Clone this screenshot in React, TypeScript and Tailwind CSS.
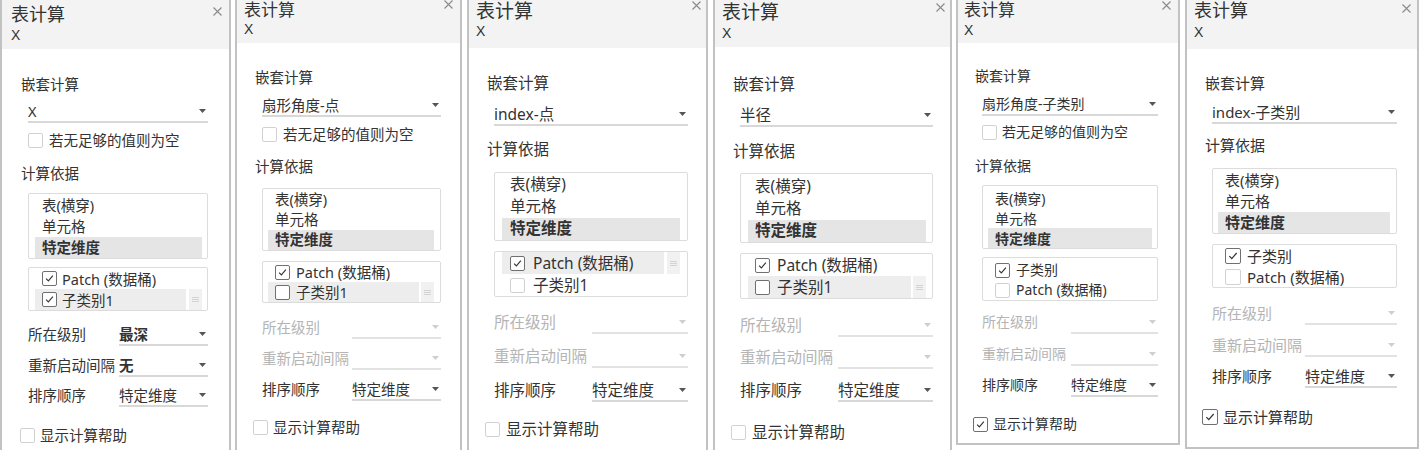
import React from "react";
import clsx from "clsx";

type Item = { label: string; checked: boolean; hl?: boolean; dark?: boolean };

type Cfg = {
  panel: string;
  header: string;
  titleCol: string;
  title: string;
  xMt: string;
  close: string;
  body: string;
  labelMl: string;
  indent: string;
  m: {
    nest: string;
    dd: string;
    cb: string;
    basis: string;
    l1: string;
    l2: string;
    lvl: string;
    rst: string;
    sort: string;
    help: string;
  };
  list: string;
  l1pt: string;
  l2pt: string;
  row: string;
  rowPl: string;
  valueCol: string;
  gap: string;
  cbGap: string;
  helpGap: string;
  cbSize: string;
  handle: string;
  nested: string;
  showEmpty: boolean;
  items: Item[];
  level?: { value: string; bold: boolean };
  restart?: { value: string; bold: boolean };
  helpChecked: boolean;
};

const panels: Cfg[] = [
  {
    panel: "w-[231px] h-[450px]",
    header: "h-[49px] pl-[9px]",
    titleCol: "pt-[5px]",
    title: "text-[18px] leading-[21px]",
    xMt: "mt-[1px]",
    close: "mt-[7px] mr-[7px]",
    body: "pl-[18px] pr-[21px] text-[14.5px]",
    labelMl: "ml-[1px]",
    indent: "ml-[8px]",
    m: {
      nest: "mt-[25px]",
      dd: "mt-[7px]",
      cb: "mt-[7px]",
      basis: "mt-[13px]",
      l1: "mt-[10px]",
      l2: "mt-[8px]",
      lvl: "mt-[13px]",
      rst: "mt-[9px]",
      sort: "mt-[8px]",
      help: "mt-[18px]",
    },
    list: "pl-[6px] pr-[5px]",
    l1pt: "pt-[1px]",
    l2pt: "pt-0",
    row: "h-[21px]",
    rowPl: "pl-[7px]",
    valueCol: "w-[91px]",
    gap: "gap-[5px]",
    cbGap: "gap-[6px]",
    helpGap: "gap-[5px]",
    cbSize: "w-[15px] h-[15px]",
    handle: "w-[13px] ml-[3px]",
    nested: "X",
    showEmpty: true,
    items: [
      { label: "Patch (数据桶)", checked: true },
      { label: "子类别1", checked: true, hl: true },
    ],
    level: { value: "最深", bold: true },
    restart: { value: "无", bold: true },
    helpChecked: false,
  },
  {
    panel: "ml-[4px] w-[227px] h-[450px]",
    header: "h-[43px] pl-[7px]",
    titleCol: "pt-[1px]",
    title: "text-[17px] leading-[19px]",
    xMt: "mt-[1px]",
    close: "mt-0 mr-[7px]",
    body: "pl-[16px] pr-[19px] text-[14.5px]",
    labelMl: "ml-[2px]",
    indent: "ml-[9px]",
    m: {
      nest: "mt-[24px]",
      dd: "mt-[8px]",
      cb: "mt-[7px]",
      basis: "mt-[12px]",
      l1: "mt-[12px]",
      l2: "mt-[10px]",
      lvl: "mt-[14px]",
      rst: "mt-[9px]",
      sort: "mt-[9px]",
      help: "mt-[16px]",
    },
    list: "pl-[5px] pr-[6px]",
    l1pt: "pt-[1px]",
    l2pt: "pt-0",
    row: "h-[20px]",
    rowPl: "pl-[7px]",
    valueCol: "w-[90px]",
    gap: "gap-[6px]",
    cbGap: "gap-[6px]",
    helpGap: "gap-[5px]",
    cbSize: "w-[15px] h-[15px]",
    handle: "w-[13px] ml-[2px]",
    nested: "扇形角度-点",
    showEmpty: true,
    items: [
      { label: "Patch (数据桶)", checked: true },
      { label: "子类别1", checked: false, hl: true, dark: true },
    ],
    helpChecked: false,
  },
  {
    panel: "ml-[5px] w-[241px] h-[450px]",
    header: "h-[48px] pl-[7px]",
    titleCol: "pt-[1px]",
    title: "text-[19px] leading-[21px]",
    xMt: "mt-[1px]",
    close: "mt-[1px] mr-[5px]",
    body: "pl-[16px] pr-[18px] text-[15.5px]",
    labelMl: "ml-[2px]",
    indent: "ml-[9px]",
    m: {
      nest: "mt-[25px]",
      dd: "mt-[11px]",
      cb: "mt-0",
      basis: "mt-[13px]",
      l1: "mt-[13px]",
      l2: "mt-[10px]",
      lvl: "mt-[15px]",
      rst: "mt-[12px]",
      sort: "mt-[12px]",
      help: "mt-[17px]",
    },
    list: "pl-[7px] pr-[7px]",
    l1pt: "pt-[1px]",
    l2pt: "pt-0",
    row: "h-[22px]",
    rowPl: "pl-[8px]",
    valueCol: "w-[98px]",
    gap: "gap-[8px]",
    cbGap: "gap-[6px]",
    helpGap: "gap-[6px]",
    cbSize: "w-[15px] h-[15px]",
    handle: "w-[13px] ml-[3px]",
    nested: "index-点",
    showEmpty: false,
    items: [
      { label: "Patch (数据桶)", checked: true, hl: true },
      { label: "子类别1", checked: false },
    ],
    helpChecked: false,
  },
  {
    panel: "ml-[5px] w-[239px] h-[450px]",
    header: "h-[47px] pl-[7px]",
    titleCol: "pt-[2px]",
    title: "text-[19px] leading-[21px]",
    xMt: "mt-[2px]",
    close: "mt-[3px] mr-[5px]",
    body: "pl-[16px] pr-[17px] text-[15.5px]",
    labelMl: "ml-[2px]",
    indent: "ml-[9px]",
    m: {
      nest: "mt-[27px]",
      dd: "mt-[11px]",
      cb: "mt-0",
      basis: "mt-[14px]",
      l1: "mt-[12px]",
      l2: "mt-[10px]",
      lvl: "mt-[16px]",
      rst: "mt-[10px]",
      sort: "mt-[11px]",
      help: "mt-[20px]",
    },
    list: "pl-[7px] pr-[6px]",
    l1pt: "pt-[2px]",
    l2pt: "pt-0",
    row: "h-[22px]",
    rowPl: "pl-[7px]",
    valueCol: "w-[98px]",
    gap: "gap-[7px]",
    cbGap: "gap-[6px]",
    helpGap: "gap-[6px]",
    cbSize: "w-[15px] h-[15px]",
    handle: "w-[13px] ml-[2px]",
    nested: "半径",
    showEmpty: false,
    items: [
      { label: "Patch (数据桶)", checked: true },
      { label: "子类别1", checked: false, hl: true, dark: true },
    ],
    helpChecked: false,
  },
  {
    panel: "ml-[4px] w-[224px] h-[445px] border-b-2",
    header: "h-[43px] pl-[6px]",
    titleCol: "pt-[1px]",
    title: "text-[17px] leading-[19px]",
    xMt: "mt-[2px]",
    close: "mt-[1px] mr-[7px]",
    body: "pl-[15px] pr-[20px] text-[14px]",
    labelMl: "ml-[2px]",
    indent: "ml-[9px]",
    m: {
      nest: "mt-[23px]",
      dd: "mt-[8px]",
      cb: "mt-[6px]",
      basis: "mt-[14px]",
      l1: "mt-[9px]",
      l2: "mt-[8px]",
      lvl: "mt-[11px]",
      rst: "mt-[10px]",
      sort: "mt-[9px]",
      help: "mt-[17px]",
    },
    list: "pl-[5px] pr-[5px]",
    l1pt: "pt-[2px]",
    l2pt: "pt-[2px]",
    row: "h-[20px]",
    rowPl: "pl-[7px]",
    valueCol: "w-[89px]",
    gap: "gap-[6px]",
    cbGap: "gap-[5px]",
    helpGap: "gap-[5px]",
    cbSize: "w-[15px] h-[15px]",
    handle: "w-[13px] ml-[2px]",
    nested: "扇形角度-子类别",
    showEmpty: true,
    items: [
      { label: "子类别", checked: true },
      { label: "Patch (数据桶)", checked: false },
    ],
    helpChecked: true,
  },
  {
    panel: "ml-[5px] w-[234px] h-[449px] border-b-2",
    header: "h-[49px] pl-[7px]",
    titleCol: "pt-[1px]",
    title: "text-[18px] leading-[21px]",
    xMt: "mt-[2px]",
    close: "mt-[4px] mr-[6px]",
    body: "pl-[15px] pr-[20px] text-[15px]",
    labelMl: "ml-[3px]",
    indent: "ml-[10px]",
    m: {
      nest: "mt-[24px]",
      dd: "mt-[9px]",
      cb: "mt-0",
      basis: "mt-[11px]",
      l1: "mt-[13px]",
      l2: "mt-[10px]",
      lvl: "mt-[15px]",
      rst: "mt-[10px]",
      sort: "mt-[9px]",
      help: "mt-[19px]",
    },
    list: "pl-[5px] pr-[6px]",
    l1pt: "pt-[1px]",
    l2pt: "pt-0",
    row: "h-[21px]",
    rowPl: "pl-[7px]",
    valueCol: "w-[93px]",
    gap: "gap-[6px]",
    cbGap: "gap-[6px]",
    helpGap: "gap-[5px]",
    cbSize: "w-[16px] h-[16px]",
    handle: "w-[13px] ml-[2px]",
    nested: "index-子类别",
    showEmpty: false,
    items: [
      { label: "子类别", checked: true },
      { label: "Patch (数据桶)", checked: false },
    ],
    helpChecked: true,
  },
];

function Check({ checked, dark, size }: { checked: boolean; dark?: boolean; size: string }) {
  return (
    <span
      className={clsx(
        "shrink-0 flex items-center justify-center rounded-[2px] border bg-white",
        size,
        checked || dark ? "border-[#707070]" : "border-[#d2d2d2]"
      )}
    >
      {checked && (
        <svg viewBox="0 0 15 15" className="w-full h-full">
          <path d="M3.6 7.6 L6.2 10.3 L11.4 4.3" fill="none" stroke="#333" strokeWidth="1.3" />
        </svg>
      )}
    </span>
  );
}

function Arrow({ disabled }: { disabled?: boolean }) {
  return (
    <svg width="7" height="4" viewBox="0 0 7 4" className="shrink-0 mr-[2px]">
      <path d="M0 0 H7 L3.5 4 Z" fill={disabled ? "#cfcfcf" : "#555"} />
    </svg>
  );
}

function Dropdown({
  value,
  bold,
  disabled,
  className,
}: {
  value: string;
  bold?: boolean;
  disabled?: boolean;
  className?: string;
}) {
  return (
    <div
      className={clsx(
        "flex items-center h-[22px] border-b-2",
        disabled ? "border-[#e2e2e2]" : "border-[#d8d8d8]",
        className
      )}
    >
      <span className={clsx("flex-1 leading-[20px] whitespace-nowrap", bold && "font-bold")}>{value}</span>
      <Arrow disabled={disabled} />
    </div>
  );
}

function Handle({ cls }: { cls: string }) {
  return (
    <div className={clsx("shrink-0 self-stretch bg-[#f1f1f1] flex items-center justify-center", cls)}>
      <svg width="7" height="7" viewBox="0 0 7 7">
        <path d="M0 1.5 H7 M0 3.5 H7 M0 5.5 H7" stroke="#cccccc" strokeWidth="0.8" />
      </svg>
    </div>
  );
}

function LevelRow({
  cfg,
  mt,
  label,
  value,
  bold,
  disabled,
}: {
  cfg: Cfg;
  mt: string;
  label: string;
  value: string;
  bold?: boolean;
  disabled?: boolean;
}) {
  return (
    <div className={clsx("flex", cfg.indent, mt)}>
      <span
        className={clsx(
          "shrink-0 leading-[20px] h-[22px] whitespace-nowrap",
          cfg.valueCol,
          disabled && "text-[#b4b4b4]"
        )}
      >
        {label}
      </span>
      <Dropdown className="flex-1" value={value} bold={bold} disabled={disabled} />
    </div>
  );
}

function Panel({ cfg }: { cfg: Cfg }) {
  const levelDisabled = !cfg.level;
  return (
    <div className={clsx("shrink-0 flex flex-col bg-white border-x-2 border-[#c2c2c2]", cfg.panel)}>
      <div
        className={clsx(
          "shrink-0 flex justify-between bg-[#f3f3f3] font-['Liberation_Sans','Noto_Sans_CJK_SC',sans-serif]",
          cfg.header
        )}
      >
        <div className={clsx("flex flex-col", cfg.titleCol)}>
          <div className={clsx("whitespace-nowrap", cfg.title)}>表计算</div>
          <div className={clsx("text-[14px] leading-[16px]", cfg.xMt)}>X</div>
        </div>
        <svg width="9" height="9" viewBox="0 0 9 9" className={clsx("shrink-0", cfg.close)}>
          <path d="M0.5 0.5 L8.5 8.5 M8.5 0.5 L0.5 8.5" stroke="#8a8a8a" strokeWidth="1.1" />
        </svg>
      </div>
      <div className={clsx("flex flex-col", cfg.body)}>
        <div className={clsx("leading-[20px] h-[20px] whitespace-nowrap", cfg.labelMl, cfg.m.nest)}>嵌套计算</div>
        <Dropdown className={clsx(cfg.indent, cfg.m.dd)} value={cfg.nested} />
        {cfg.showEmpty && (
          <div className={clsx("flex items-center h-[20px]", cfg.indent, cfg.m.cb, cfg.cbGap)}>
            <Check checked={false} size={cfg.cbSize} />
            <span className="leading-[20px] whitespace-nowrap">若无足够的值则为空</span>
          </div>
        )}
        <div className={clsx("leading-[20px] h-[20px] whitespace-nowrap", cfg.labelMl, cfg.m.basis)}>计算依据</div>
        <div
          className={clsx(
            "flex flex-col border border-[#dcdcdc] rounded-[2px]",
            cfg.indent,
            cfg.m.l1,
            cfg.list,
            cfg.l1pt
          )}
        >
          <div className={clsx("flex items-center whitespace-nowrap", cfg.row, cfg.rowPl)}>表(横穿)</div>
          <div className={clsx("flex items-center whitespace-nowrap", cfg.row, cfg.rowPl)}>单元格</div>
          <div className={clsx("flex items-center whitespace-nowrap font-bold bg-[#e5e5e5]", cfg.row, cfg.rowPl)}>
            特定维度
          </div>
        </div>
        <div
          className={clsx(
            "flex flex-col border border-[#dcdcdc] rounded-[2px]",
            cfg.indent,
            cfg.m.l2,
            cfg.list,
            cfg.l2pt
          )}
        >
          {cfg.items.map((it) => (
            <div key={it.label} className={clsx("flex", cfg.row)}>
              <div
                className={clsx(
                  "flex-1 flex items-center whitespace-nowrap",
                  cfg.rowPl,
                  cfg.gap,
                  it.hl && "bg-[#ededed]"
                )}
              >
                <Check checked={it.checked} dark={it.dark} size={cfg.cbSize} />
                <span className="leading-[20px]">{it.label}</span>
              </div>
              {it.hl && <Handle cls={cfg.handle} />}
            </div>
          ))}
        </div>
        <LevelRow
          cfg={cfg}
          mt={cfg.m.lvl}
          label="所在级别"
          value={cfg.level ? cfg.level.value : ""}
          bold={cfg.level?.bold}
          disabled={levelDisabled}
        />
        <LevelRow
          cfg={cfg}
          mt={cfg.m.rst}
          label="重新启动间隔"
          value={cfg.restart ? cfg.restart.value : ""}
          bold={cfg.restart?.bold}
          disabled={levelDisabled}
        />
        <LevelRow cfg={cfg} mt={cfg.m.sort} label="排序顺序" value="特定维度" />
        <div className={clsx("flex items-center h-[20px]", cfg.m.help, cfg.helpGap)}>
          <Check checked={cfg.helpChecked} size={cfg.cbSize} />
          <span className="leading-[20px] whitespace-nowrap">显示计算帮助</span>
        </div>
      </div>
    </div>
  );
}

export default function App() {
  return (
    <div className="flex items-start w-[1420px] h-[450px] overflow-hidden bg-white text-[#333] font-['Noto_Sans','Noto_Sans_CJK_SC',sans-serif]">
      {panels.map((p, i) => (
        <Panel key={i} cfg={p} />
      ))}
    </div>
  );
}
